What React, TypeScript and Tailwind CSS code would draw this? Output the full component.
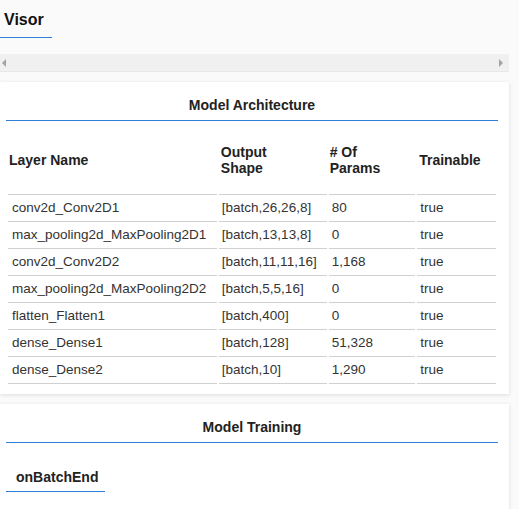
import React from 'react';

interface LayerRow {
  name: string;
  shape: string;
  params: string;
  trainable: string;
}

const layers: LayerRow[] = [
  { name: 'conv2d_Conv2D1', shape: '[batch,26,26,8]', params: '80', trainable: 'true' },
  { name: 'max_pooling2d_MaxPooling2D1', shape: '[batch,13,13,8]', params: '0', trainable: 'true' },
  { name: 'conv2d_Conv2D2', shape: '[batch,11,11,16]', params: '1,168', trainable: 'true' },
  { name: 'max_pooling2d_MaxPooling2D2', shape: '[batch,5,5,16]', params: '0', trainable: 'true' },
  { name: 'flatten_Flatten1', shape: '[batch,400]', params: '0', trainable: 'true' },
  { name: 'dense_Dense1', shape: '[batch,128]', params: '51,328', trainable: 'true' },
  { name: 'dense_Dense2', shape: '[batch,10]', params: '1,290', trainable: 'true' },
];

const CardTitle = ({ title }: { title: string }) => (
  <div className="pt-[14px] pb-[5px] text-center text-[14px] leading-[19px] font-bold text-[#222] border-b border-[#2f7fdb]">
    {title}
  </div>
);

const App: React.FC = () => {
  return (
    <div
      className="w-[519px] h-[509px] overflow-hidden bg-[#fafafa] text-[#333]"
      style={{ fontFamily: '"Liberation Sans", Arial, sans-serif' }}
    >
      {/* tab header */}
      <div className="pt-[8px]">
        <div className="inline-block pl-[4px] pr-[8px] pb-[6px] text-[16px] leading-[23px] font-bold text-[#111] border-b border-[#2f7fdb]">
          Visor
        </div>
      </div>

      {/* horizontal scroll strip */}
      <div className="mt-[16px] w-[509px] h-[18px] bg-[#f0f0f0] border-b border-[#e8e8e8] flex items-center justify-between px-[2px]">
        <svg width="5" height="8" viewBox="0 0 5 8">
          <path d="M4 0 L0 4 L4 8 Z" fill="#a3a3a3" />
        </svg>
        <svg width="5" height="8" viewBox="0 0 5 8" className="mr-[3px]">
          <path d="M0 0 L4 4 L0 8 Z" fill="#a3a3a3" />
        </svg>
      </div>

      {/* Model Architecture */}
      <div className="mt-[10px] w-[509px] bg-white shadow-[0_1px_4px_rgba(0,0,0,0.12)] pl-[6px] pr-[11px] pb-[10px]">
        <CardTitle title="Model Architecture" />
        <table className="mt-[8px] border-separate border-spacing-x-[2px] border-spacing-y-0 text-[13.5px] text-left">
          <thead>
            <tr className="h-[66px]">
              <th className="w-[209px] pl-[1px] pr-1 pb-[3px] border-b border-[#d0d0d0] text-[14px] font-bold text-[#222] leading-[16px] align-middle">Layer Name</th>
              <th className="w-[108px] pl-[2px] pr-1 pb-[3px] border-b border-[#d0d0d0] text-[14px] font-bold text-[#222] leading-[16px] align-middle">Output<br />Shape</th>
              <th className="w-[87px] pl-[1px] pr-1 pb-[3px] border-b border-[#d0d0d0] text-[14px] font-bold text-[#222] leading-[16px] align-middle"># Of<br />Params</th>
              <th className="w-[79px] pl-[2px] pr-1 pb-[3px] border-b border-[#d0d0d0] text-[14px] font-bold text-[#222] leading-[16px] align-middle">Trainable</th>
            </tr>
          </thead>
          <tbody>
            {layers.map((layer) => (
              <tr key={layer.name} className="h-[27px]">
                <td className="pl-[4px] border-b border-[#d0d0d0] leading-[16px]">{layer.name}</td>
                <td className="pl-[3px] border-b border-[#d0d0d0] leading-[16px]">{layer.shape}</td>
                <td className="pl-[3px] border-b border-[#d0d0d0] leading-[16px]">{layer.params}</td>
                <td className="pl-[3px] border-b border-[#d0d0d0] leading-[16px]">{layer.trainable}</td>
              </tr>
            ))}
          </tbody>
        </table>
      </div>

      {/* Model Training */}
      <div className="mt-[10px] w-[509px] h-[120px] bg-white shadow-[0_1px_4px_rgba(0,0,0,0.12)] pl-[6px] pr-[11px]">
        <CardTitle title="Model Training" />
        <div className="mt-[25px] inline-block pl-[10px] pr-[7px] pb-[5px] text-[14px] leading-[18px] font-bold text-[#222] border-b border-[#2f7fdb]">
          onBatchEnd
        </div>
      </div>
    </div>
  );
};

export default App;
